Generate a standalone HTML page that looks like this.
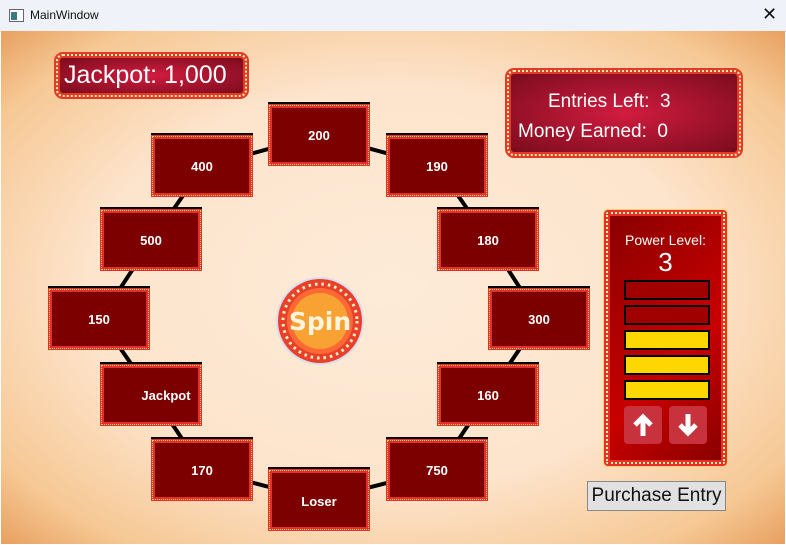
<!DOCTYPE html>
<html><head><style>
body{margin:0;width:786px;height:545px;overflow:hidden;font-family:"Liberation Sans",sans-serif;position:relative;background:#fff}
.title{position:absolute;left:0;top:0;width:786px;height:31px;background:#eff2f8;border-bottom:1px solid #e0e0e0}
.title span{position:absolute;left:30px;top:8px;font-size:12px;color:#111}
.content{position:absolute;left:1px;top:31px;width:784px;height:513px;background:radial-gradient(ellipse at 50% 50%,#fdebd8 0%,#fde4cc 55%,#f6c894 85%,#e8a060 100%)}
.box{position:absolute;width:94px;height:54px;background:#7c0000;border:4px solid #e03030;outline:1px dotted #f6d24a;outline-offset:-2px;box-shadow:0 -2px 0 #000;color:#fff;font-weight:bold;font-size:13px;display:flex;align-items:center;justify-content:center}
.banner{position:absolute;border-radius:9px;border:6px solid #e23a2a;outline:2px dotted #fff3a0;outline-offset:-4px;background:radial-gradient(ellipse,#d21c40,#7a0c1c);color:#fff}
.bar{position:absolute;left:624px;width:82px;height:16px;border:2px solid #000}
.btn{position:absolute;top:406px;width:38px;height:38px;background:#c8323c;border-radius:4px}
</style></head><body>
<div class="title"><svg style="position:absolute;left:9px;top:9px" width="15" height="13"><rect x=".5" y=".5" width="14" height="12" fill="#fff" stroke="#666"/><rect x="2" y="3" width="6" height="8" fill="#3a7a80"/></svg><span>MainWindow</span><span style="left:762px;top:4px;font-size:18px">✕</span></div>
<div class="content"></div>
<svg style="position:absolute;left:0;top:0" width="786" height="545"><polygon points="319,135 438,167 489,240 540,319 489,394 438,470 320,500 203,470 152,394 100,319 152,240 203,167" fill="none" stroke="#000" stroke-width="4"/>
<circle cx="320" cy="321" r="44" fill="#dcdcec"/><circle cx="320" cy="321" r="42" fill="#e8402a"/><circle cx="320" cy="321" r="37" fill="none" stroke="#fff6c0" stroke-width="3" stroke-dasharray="2.5 4"/><circle cx="320" cy="321" r="33" fill="#fb6a35"/><circle cx="320" cy="321" r="28" fill="#f7a232"/>
<text x="320" y="330" text-anchor="middle" font-family="DejaVu Sans" font-weight="bold" font-size="25" fill="#fff4dc">Spin</text></svg>
<div class="banner" style="left:54px;top:52px;height:35px;font-size:25px;line-height:35px;padding-left:4px;width:179px">Jackpot: 1,000</div>
<div class="banner" style="left:505px;top:68px;width:226px;height:78px;font-size:19px;line-height:29px"><div style="position:absolute;left:37px;top:13px">Entries Left:&nbsp; 3</div><div style="position:absolute;left:7px;top:43px">Money Earned:&nbsp; 0</div></div>
<div class="box" style="left:268px;top:104px">200</div>
<div class="box" style="left:151px;top:135px">400</div>
<div class="box" style="left:386px;top:135px">190</div>
<div class="box" style="left:100px;top:209px">500</div>
<div class="box" style="left:437px;top:209px">180</div>
<div class="box" style="left:48px;top:288px">150</div>
<div class="box" style="left:488px;top:288px">300</div>
<div class="box" style="left:100px;top:364px;padding-left:30px;width:64px">Jackpot</div>
<div class="box" style="left:437px;top:364px">160</div>
<div class="box" style="left:151px;top:439px">170</div>
<div class="box" style="left:386px;top:439px">750</div>
<div class="box" style="left:268px;top:469px;padding-top:2px;height:52px">Loser</div>
<div style="position:absolute;left:604px;top:210px;width:111px;height:244px;border:6px solid #e8302a;outline:2px dotted #fff4a0;outline-offset:-4px;border-radius:4px;background:linear-gradient(135deg,#8a0000,#c80000 60%,#8a0000);box-shadow:0 0 0 1px #f3d070"></div>
<div style="position:absolute;left:604px;top:232px;width:123px;text-align:center;color:#fff;font-size:14px">Power Level:</div>
<div style="position:absolute;left:604px;top:247px;width:123px;text-align:center;color:#fff;font-size:26px">3</div>
<div class="bar" style="top:280px;background:#a00000"></div>
<div class="bar" style="top:305px;background:#a00000"></div>
<div class="bar" style="top:330px;background:#ffd700"></div>
<div class="bar" style="top:355px;background:#ffd700"></div>
<div class="bar" style="top:380px;background:#ffd700"></div>
<div class="btn" style="left:624px"><svg width="38" height="38"><path d="M19 30V12M11 19L19 11L27 19" stroke="#fff" stroke-width="5" fill="none" stroke-linejoin="miter"/></svg></div>
<div class="btn" style="left:669px"><svg width="38" height="38"><path d="M19 8V26M11 19L19 27L27 19" stroke="#fff" stroke-width="5" fill="none"/></svg></div>
<div style="position:absolute;left:587px;top:481px;width:137px;height:28px;border:1px solid #888;background:#e1e1e1;font-size:19px;line-height:28px;text-align:center;color:#111">Purchase Entry</div>
</body></html>
